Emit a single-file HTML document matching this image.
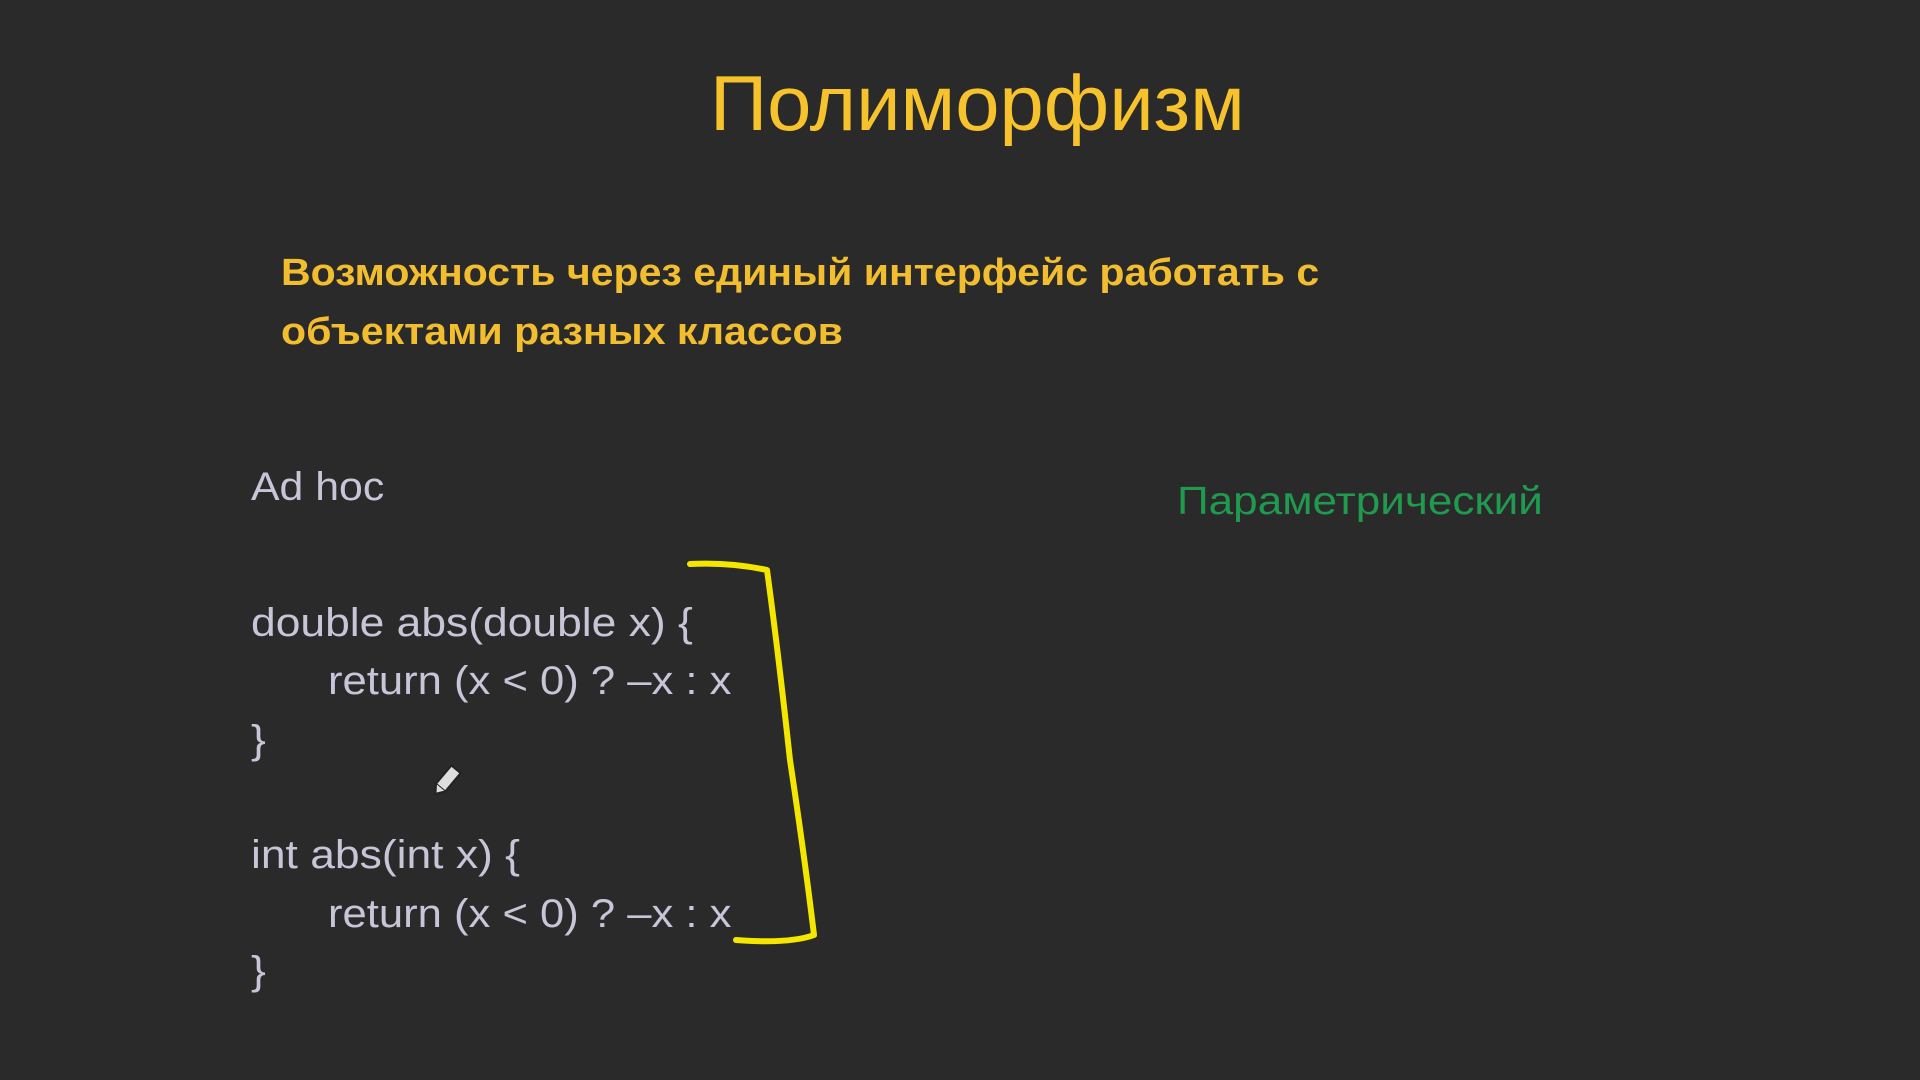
<!DOCTYPE html>
<html><head><meta charset="utf-8"><style>
body{margin:0;width:1920px;height:1080px;background:#2a2a2a;overflow:hidden;position:relative;font-family:"Liberation Sans","DejaVu Sans",sans-serif}
.a{position:absolute;white-space:nowrap;line-height:1}
.t{color:#f7c32c;font-size:78px;left:710px;top:64px;transform:scaleX(1.02);transform-origin:left}
.s{color:#f2bd2e;font-size:38px;font-weight:bold;left:281px;transform:scaleX(1.08);transform-origin:left}
.c{color:#c9c5d9;font-size:40px;left:251px;transform:scaleX(1.11);transform-origin:left}
.g{color:#1f9a4e;font-size:39px;left:1177px;top:482px;transform:scaleX(1.13);transform-origin:left}
</style></head><body>
<div class="a t">Полиморфизм</div>
<div class="a s" style="top:254px">Возможность через единый интерфейс работать с</div>
<div class="a s" style="top:313px">объектами разных классов</div>
<div class="a c" style="top:467px;transform:scaleX(1.07)">Ad hoc</div>
<div class="a g">Параметрический</div>
<div class="a c" style="top:603px">double abs(double x) {</div>
<div class="a c" style="top:661px;left:328px;transform:scaleX(1.09)">return (x &lt; 0) ? –x : x</div>
<div class="a c" style="top:720px">}</div>
<div class="a c" style="top:835px">int abs(int x) {</div>
<div class="a c" style="top:894px;left:328px;transform:scaleX(1.09)">return (x &lt; 0) ? –x : x</div>
<div class="a c" style="top:951px">}</div>
<svg class="a" style="left:0;top:0" width="1920" height="1080">
<path d="M690 564 Q730 562 767 570 Q778 650 790 760 Q805 860 814 935 Q790 944 736 940" fill="none" stroke="#f5e600" stroke-width="6" stroke-linecap="round" stroke-linejoin="round"/>
<g transform="translate(447,780) rotate(40)"><rect x="-6" y="-14" width="12" height="24" fill="#ddd" stroke="#222" stroke-width="2"/><path d="M-6 10 L0 18 L6 10" fill="#ddd" stroke="#222" stroke-width="2"/></g>
</svg>
</body></html>
